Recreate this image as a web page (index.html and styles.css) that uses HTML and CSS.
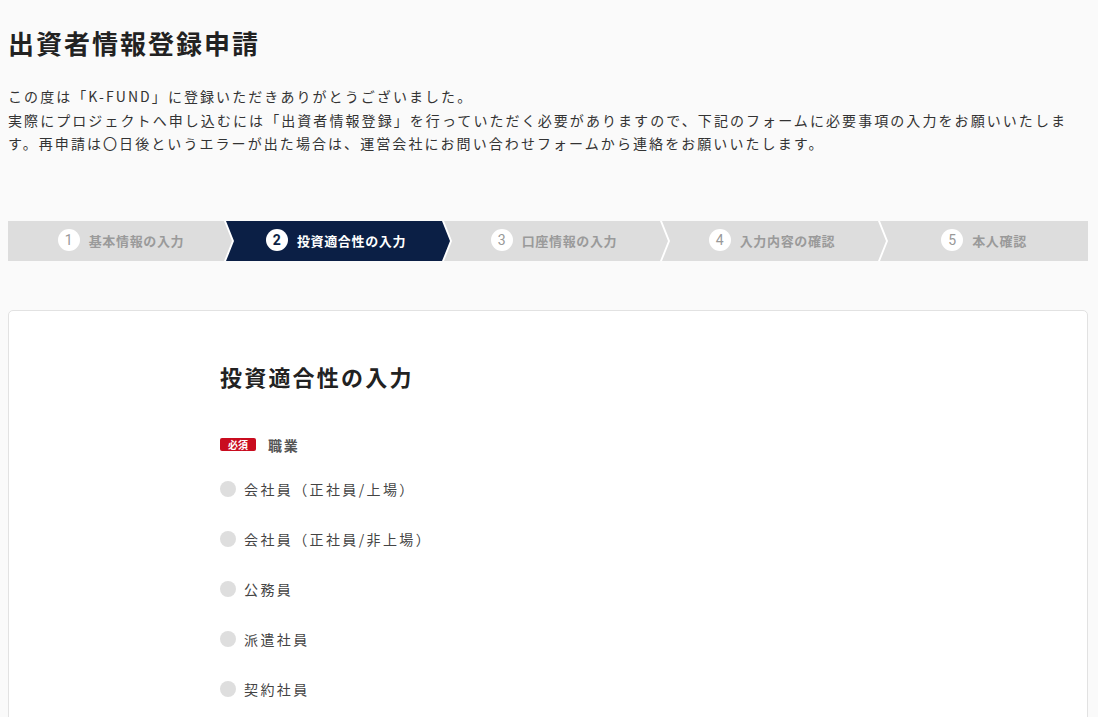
FILE: index.html
```html
<!DOCTYPE html>
<html lang="ja">
<head>
<meta charset="utf-8">
<title>出資者情報登録申請</title>
<link rel="stylesheet" href="styles.css">
</head>
<body>
<div class="page">
  <h1 class="title">出資者情報登録申請</h1>
  <p class="lead">この度は「K-FUND」に登録いただきありがとうございました。<br>実際にプロジェクトへ申し込むには「出資者情報登録」を行っていただく必要がありますので、下記のフォームに必要事項の入力をお願いいたします。再申請は〇日後というエラーが出た場合は、運営会社にお問い合わせフォームから連絡をお願いいたします。</p>

  <ol class="steps">
    <li class="step step-first"><span class="num">1</span><span class="label">基本情報の入力</span></li>
    <li class="step step-active"><span class="num">2</span><span class="label">投資適合性の入力</span></li>
    <li class="step"><span class="num">3</span><span class="label">口座情報の入力</span></li>
    <li class="step"><span class="num">4</span><span class="label">入力内容の確認</span></li>
    <li class="step step-last"><span class="num">5</span><span class="label">本人確認</span></li>
  </ol>

  <section class="card">
    <div class="form">
      <h2 class="form-title">投資適合性の入力</h2>
      <div class="field-label"><span class="badge">必須</span><span class="field-name">職業</span></div>
      <ul class="radios">
        <li class="radio"><span class="dot"></span><span class="radio-text">会社員（正社員/上場）</span></li>
        <li class="radio"><span class="dot"></span><span class="radio-text">会社員（正社員/非上場）</span></li>
        <li class="radio"><span class="dot"></span><span class="radio-text">公務員</span></li>
        <li class="radio"><span class="dot"></span><span class="radio-text">派遣社員</span></li>
        <li class="radio"><span class="dot"></span><span class="radio-text">契約社員</span></li>
      </ul>
    </div>
  </section>
</div>
</body>
</html>
```

FILE: styles.css
```css
* { box-sizing: border-box; }

html, body {
  margin: 0;
  padding: 0;
  background: #fafafa;
}

body {
  font-family: "Noto Sans CJK JP", "Noto Sans", sans-serif;
  color: #333;
  overflow: hidden;
}

.page {
  width: 1080px;
  margin-left: 8px;
}

.title {
  margin: 25px 0 0;
  font-size: 26px;
  line-height: 36px;
  font-weight: 700;
  letter-spacing: 2px;
  color: #222;
}

.lead {
  margin: 24px 0 0;
  max-width: 1068px;
  font-size: 14px;
  line-height: 23.7px;
  letter-spacing: 0.148em;
  color: #333;
}

.steps {
  list-style: none;
  margin: 65px 0 0;
  padding: 0;
  display: flex;
  height: 40px;
  background: #fff;
}

.step {
  flex: 0 0 224px;
  margin-left: -6px;
  height: 40px;
  background: #dddddd;
  color: #9a9a9a;
  display: flex;
  align-items: center;
  justify-content: center;
  gap: 9px;
  padding: 0 4px 2px 0;
  clip-path: polygon(0 0, calc(100% - 8px) 0, 100% 50%, calc(100% - 8px) 100%, 0 100%, 8px 50%);
}

.step-first {
  margin-left: 0;
  clip-path: polygon(0 0, calc(100% - 8px) 0, 100% 50%, calc(100% - 8px) 100%, 0 100%);
  padding: 0 0 2px 2px;
}

.step-last {
  flex: 1 1 auto;
  padding: 0 0 2px 0;
  clip-path: polygon(0 0, 100% 0, 100% 100%, 0 100%, 8px 50%);
}

.num {
  width: 22px;
  height: 22px;
  border-radius: 50%;
  background: #fff;
  color: #999;
  font-family: "Roboto", "Noto Sans", sans-serif;
  font-size: 14px;
  display: flex;
  align-items: center;
  justify-content: center;
}

.label {
  font-size: 13px;
  font-weight: 700;
  letter-spacing: 0.05em;
  line-height: 1;
}

.step-active {
  background: #0b1f45;
  color: #fff;
}

.step-active .num {
  color: #0b1f45;
  font-weight: 700;
}

.card {
  margin-top: 49px;
  background: #fff;
  border: 1px solid #e2e2e2;
  border-radius: 5px;
  padding: 49px 0 40px 211px;
}

.form {
  width: 640px;
}

.form-title {
  margin: 0;
  font-size: 22px;
  line-height: 33px;
  font-weight: 700;
  letter-spacing: 0.1em;
  color: #222;
}

.field-label {
  margin-top: 41px;
  display: flex;
  align-items: center;
  height: 21px;
}

.badge {
  width: 36px;
  height: 13px;
  border-radius: 2px;
  background: #c90c1f;
  color: #fff;
  font-size: 10px;
  font-weight: 700;
  line-height: 13px;
  text-align: center;
  letter-spacing: 0;
}

.field-name {
  margin-left: 12px;
  font-size: 14px;
  font-weight: 700;
  color: #555;
  letter-spacing: 0.12em;
}

.radios {
  list-style: none;
  margin: 9px 0 0;
  padding: 0;
}

.radio {
  height: 50px;
  display: flex;
  align-items: center;
}

.dot {
  width: 16px;
  height: 16px;
  border-radius: 50%;
  background: #dedede;
  flex: none;
}

.radio-text {
  margin-left: 8px;
  font-size: 14px;
  letter-spacing: 0.17em;
  color: #444;
}
```
